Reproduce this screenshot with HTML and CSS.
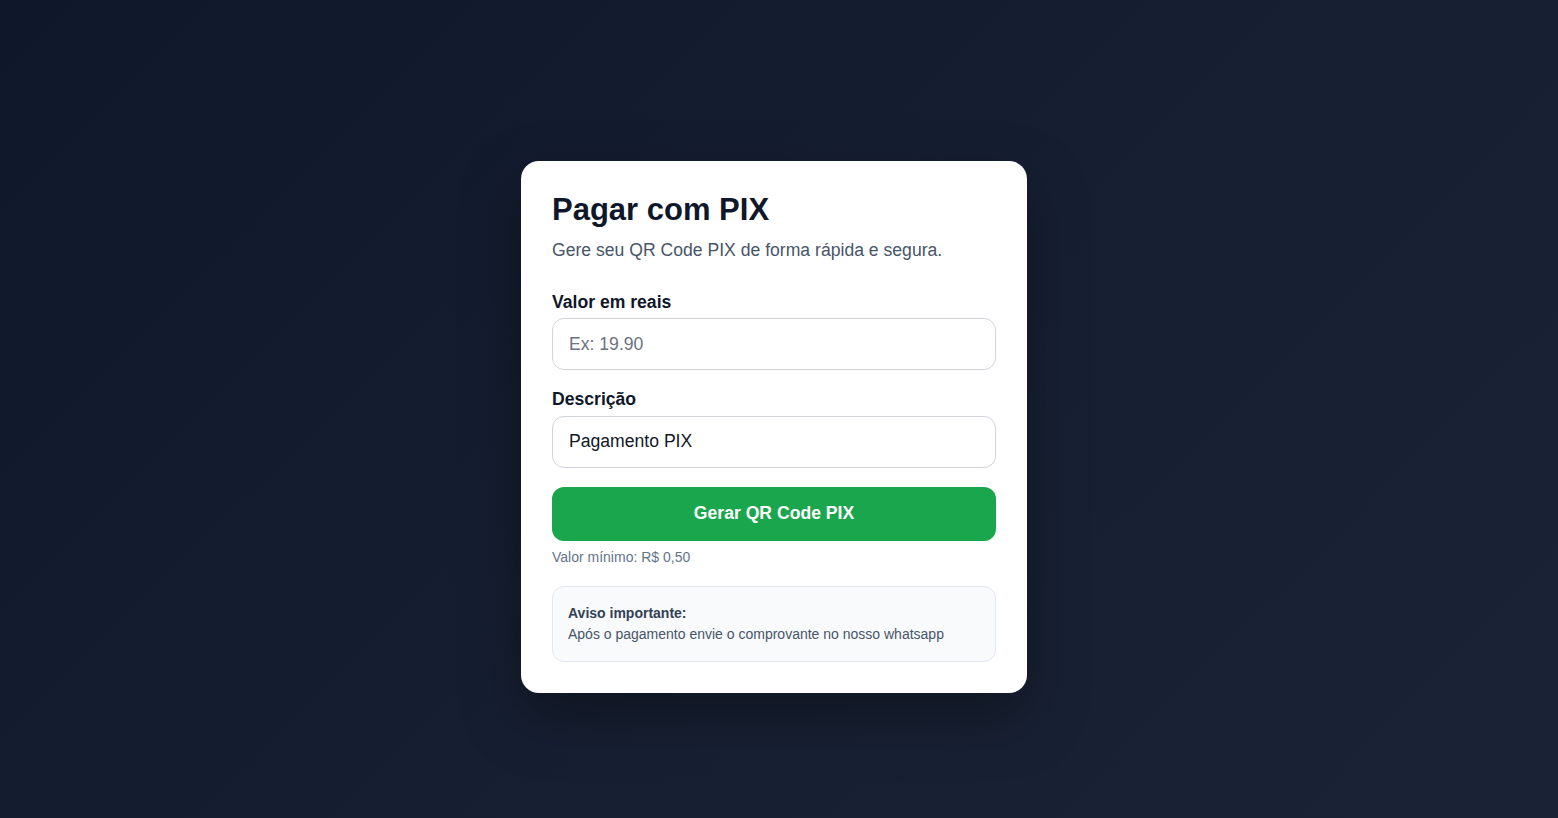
FILE: index.html
```html
<!DOCTYPE html>
<html lang="pt-BR">
  <head>
    <meta charset="UTF-8" />
    <meta name="viewport" content="width=device-width, initial-scale=1.0" />
    <title>Pagar com PIX</title>
    <link rel="stylesheet" href="styles.css">
  </head>
  <body>
    <main class="page">
      <section class="card">
        <h1 class="card-title">Pagar com PIX</h1>
        <p class="card-subtitle">Gere seu QR Code PIX de forma rápida e segura.</p>

        <form class="pix-form" onsubmit="return false">
          <label class="field-label" for="valor">Valor em reais</label>
          <input id="valor" class="field-input" type="text" inputmode="decimal" placeholder="Ex: 19.90" />

          <label class="field-label field-label--spaced" for="descricao">Descrição</label>
          <input id="descricao" class="field-input" type="text" value="Pagamento PIX" />

          <button type="submit" class="btn-pix">Gerar QR Code PIX</button>
          <p class="hint">Valor mínimo: R$ 0,50</p>
        </form>

        <div class="notice">
          <strong>Aviso importante:</strong>
          <span>Após o pagamento envie o comprovante no nosso whatsapp</span>
        </div>
      </section>
    </main>
  </body>
</html>
```

FILE: styles.css
```css
* {
  box-sizing: border-box;
}

html,
body {
  margin: 0;
  height: 100%;
}

body {
  font-family: "Liberation Sans", Arial, sans-serif;
  background: linear-gradient(135deg, #0f172a 0%, #172033 60%, #1a2335 100%);
  color: #0f172a;
}

.page {
  min-height: 100vh;
  display: flex;
  align-items: center;
  justify-content: center;
  padding: 36px 10px 0 0;
}

.card {
  width: 506px;
  padding: 32px 31px 31px;
  background: #ffffff;
  border-radius: 18px;
  box-shadow: 0 24px 60px rgba(0, 0, 0, 0.35);
}

.card-title {
  margin: 0;
  font-size: 31px;
  line-height: 1.1;
  font-weight: 700;
  color: #0f172a;
}

.card-subtitle {
  margin: 10px 0 0;
  font-size: 17.6px;
  line-height: 1.5;
  color: #475569;
}

.pix-form {
  display: flex;
  flex-direction: column;
  margin-top: 25px;
}

.field-label {
  font-size: 17.6px;
  line-height: 1.5;
  font-weight: 700;
  color: #0f172a;
  margin-bottom: 3px;
}

.field-label--spaced {
  margin-top: 16px;
}

.field-input {
  height: 52px;
  padding: 0 16px;
  border: 1px solid #d1d5db;
  border-radius: 12px;
  font-family: inherit;
  font-size: 17.6px;
  color: #111827;
  background: #fff;
  outline: none;
}

.field-input::placeholder {
  color: #6b7280;
}

.btn-pix {
  margin-top: 19px;
  height: 54px;
  border: 0;
  border-radius: 12px;
  background: #19a64c;
  color: #fff;
  font-family: inherit;
  font-size: 17.6px;
  font-weight: 700;
  cursor: pointer;
}

.hint {
  margin: 6px 0 0;
  font-size: 14px;
  line-height: 1.5;
  color: #64748b;
}

.notice {
  display: flex;
  flex-direction: column;
  margin-top: 18px;
  padding: 16px 15px;
  background: #f8fafc;
  border: 1px solid #e2e8f0;
  border-radius: 12px;
  font-size: 14px;
  line-height: 1.5;
  color: #475569;
}

.notice strong {
  color: #334155;
}
```
